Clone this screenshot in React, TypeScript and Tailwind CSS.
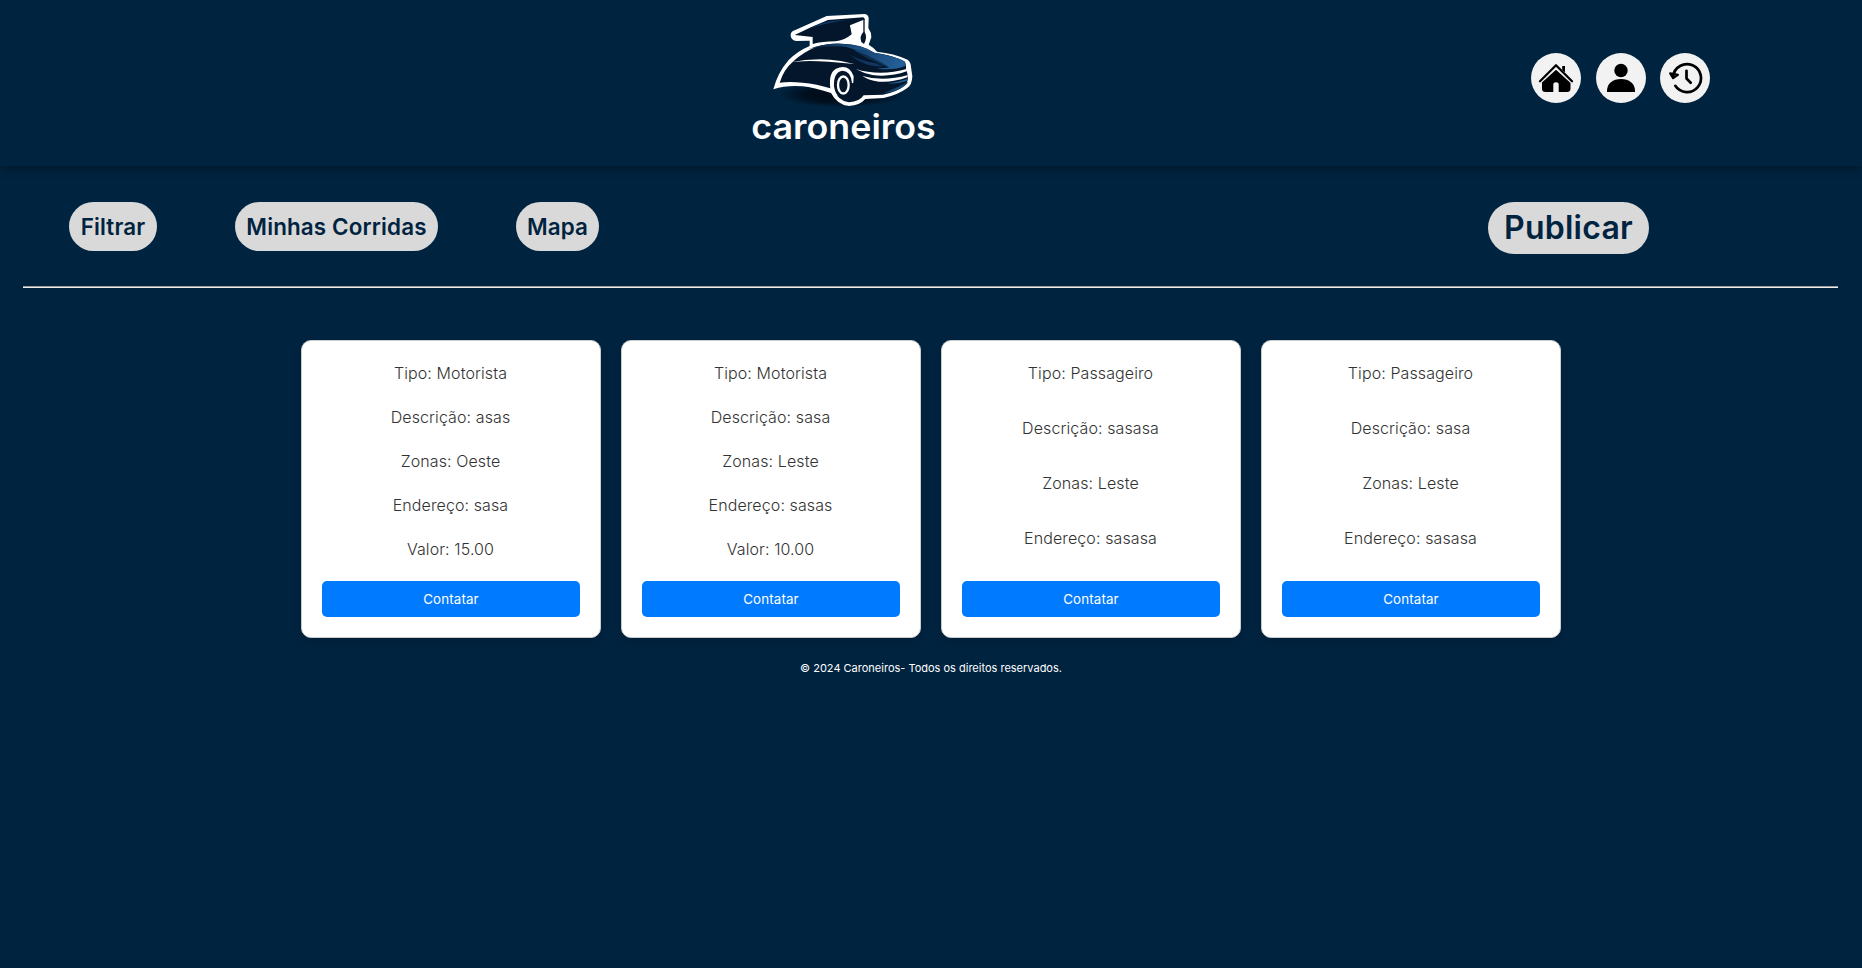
import React from "react";

type Ride = {
  tipo: string;
  descricao: string;
  zonas: string;
  endereco: string;
  valor?: string;
};

const rides: Ride[] = [
  { tipo: "Motorista", descricao: "asas", zonas: "Oeste", endereco: "sasa", valor: "15.00" },
  { tipo: "Motorista", descricao: "sasa", zonas: "Leste", endereco: "sasas", valor: "10.00" },
  { tipo: "Passageiro", descricao: "sasasa", zonas: "Leste", endereco: "sasasa" },
  { tipo: "Passageiro", descricao: "sasa", zonas: "Leste", endereco: "sasasa" },
];

function Logo() {
  return (
    <svg viewBox="0 0 690 480" className="h-[160px] w-[230px]" role="img" aria-label="caroneiros">
      <defs>
        <linearGradient id="roof" x1="0" y1="0" x2="1" y2="0.3">
          <stop offset="0" stopColor="#03162b" />
          <stop offset="0.4" stopColor="#123c66" />
          <stop offset="1" stopColor="#1f5a92" />
        </linearGradient>
        <linearGradient id="hood" x1="0" y1="0" x2="1" y2="0.3">
          <stop offset="0" stopColor="#143f6c" />
          <stop offset="1" stopColor="#235f96" />
        </linearGradient>
        <radialGradient id="ground">
          <stop offset="0" stopColor="#000914" />
          <stop offset="0.6" stopColor="#000914" stopOpacity="0.75" />
          <stop offset="1" stopColor="#000914" stopOpacity="0" />
        </radialGradient>
      </defs>
      <ellipse cx="335" cy="284" rx="190" ry="38" fill="url(#ground)" />
      {/* White outline around car, wheel and cap */}
      <path
        d="M130 268 Q143 218 176 180 Q203 153 239 138 V122 L198 123 Q181 119 182 104 Q183 94 196 90 L290 48 L404 42 Q416 44 416 56 L415 84 Q425 98 424 112 L416 134 Q432 143 441 155 Q491 160 533 179 Q543 187 543 201 L547 229 Q546 255 532 264 Q501 286 461 294 L406 297 Q390 316 357 318 Q322 315 303 279 Q251 262 217 259 Q170 255 130 268Z"
        fill="#fff"
      />
      {/* Body */}
      <path
        d="M149 248 Q161 209 190 184 Q218 158 256 142 Q292 129 336 131 Q397 133 433 158 Q492 166 523 184 Q529 190 528 205 L534 229 Q534 248 524 257 Q501 275 459 284 L401 286 Q389 305 357 307 Q326 304 309 267 Q257 251 218 248 Q177 244 149 248Z"
        fill="#03162b"
      />
      {/* Roof and hood highlights */}
      <path d="M235 148 Q283 128 342 132 Q398 136 433 158 Q402 152 375 149 Q345 137 310 139 Q268 138 235 148Z" fill="url(#roof)" />
      <path
        d="M372 149 Q402 145 433 158 Q493 167 523 184 L528 197 Q494 212 440 206 Q465 205 478 202 Q456 196 431 182 Q398 170 372 149Z"
        fill="url(#hood)"
      />
      <path d="M378 154 Q412 164 440 180 Q462 190 478 202 Q445 192 424 180 Q398 170 378 154Z" fill="#03162b" opacity="0.55" />
      <path d="M362 166 Q396 184 438 190 Q450 196 458 200 Q438 200 418 196 Q385 186 362 166Z" fill="#113760" />
      <path d="M181 187 Q261 171 332 183 Q352 187 373 192 Q286 183 238 183 Q206 184 181 187Z" fill="#fff" />
      {/* Front grille lines */}
      <path d="M377 207 Q452 230 532 206 L530 214 Q479 232 427 225 Q399 219 377 207Z" fill="#fff" />
      <path d="M397 228 Q459 246 534 225 L532 232 Q489 248 447 245 Q413 240 397 228Z" fill="#fff" />
      <path d="M460 280 Q490 268 534 246 Q532 252 524 257 Q501 275 460 280Z" fill="#174873" />
      <path d="M474 250 Q505 246 534 236 V241 Q511 252 474 250Z" fill="#24639a" />
      {/* Front wheel */}
      <path d="M303 278 Q292 220 318 206 Q357 190 371 229 L370 248 L366 250 Q363 213 338 212 Q310 215 312 259 Q315 279 324 287Z" fill="#fff" />
      <ellipse cx="340" cy="255" rx="20" ry="29" fill="#03162b" />
      <ellipse cx="340" cy="255" rx="16" ry="25.5" fill="#03162b" stroke="#fff" strokeWidth="7" />
      {/* Graduation cap */}
      <path d="M194 105 Q239 82 294 60 L400 52 L405 58 L360 76 L365 103 Q343 122 316 124 Q277 124 248 132 V111 L194 105Z" fill="#03162b" />
      <path d="M240 85 Q268 71 298 64 Q330 60 350 61 Q319 64 287 72 Q262 78 240 85Z" fill="#113760" />
      <path d="M360 78 L391 65 V88 L366 104 L370 92Z" fill="#fff" />
      <path d="M400 57 V96 Q388 108 394 126 L402 132 Q413 112 404 96 V56Z" fill="#03162b" />
      <text
        x="64"
        y="416"
        textLength="553"
        lengthAdjust="spacingAndGlyphs"
        fontSize="101"
        fontWeight="600"
        fontFamily="Inter, sans-serif"
        fill="#fff"
      >
        caroneiros
      </text>
    </svg>
  );
}

function HomeIcon() {
  return (
    <svg viewBox="0 0 50 50" className="size-full">
      <path d="M31.2 13h2.8v11h-2.8z" />
      <path d="M11 30V27L25 15l14.5 12v8.5q0 3.5-3.5 3.5h-8.3v-7.5q0-2.3-2.7-2.3t-2.7 2.3V39H14.5Q11 39 11 35.5Z" />
      <path d="M9 28.5 25 14l16 14.5" fill="none" stroke="#f2f2f2" strokeWidth="4.2" />
      <path d="M9 28.2 25 12.3l16 15.9" fill="none" stroke="#000" strokeWidth="2.3" strokeLinecap="round" strokeLinejoin="round" />
    </svg>
  );
}

function UserIcon() {
  return (
    <svg viewBox="0 0 50 50" className="size-full">
      <circle cx="25" cy="17.5" r="6.7" />
      <path d="M11 39v-1.3C11 30.5 17 26 25 26s14 4.5 14 11.7V39Z" />
    </svg>
  );
}

function HistoryIcon() {
  return (
    <svg viewBox="0 0 50 50" className="size-full" fill="none" stroke="#000" strokeWidth="2.7" strokeLinecap="round" strokeLinejoin="round">
      <path d="M13.1 23.5A14 14 0 1 1 15.3 32.8" />
      <path d="m10.2 20.4 2.9 4.8 4.8-3.4Z" strokeWidth="2.2" />
      <path d="M26.5 17.8v7.7l4.2 4.2" />
    </svg>
  );
}

const circle = "size-[50px] rounded-full bg-[#f2f2f2]";
const pill = "h-[49px] rounded-[25px] bg-[#d9d9d9] text-center text-[22.4px] font-semibold leading-[50px] tracking-[0.15px]";

function RideCard({ ride }: { ride: Ride }) {
  const rows = [
    `Tipo: ${ride.tipo}`,
    `Descrição: ${ride.descricao}`,
    `Zonas: ${ride.zonas}`,
    `Endereço: ${ride.endereco}`,
  ];
  if (ride.valor) rows.push(`Valor: ${ride.valor}`);
  return (
    <article className="flex h-[298px] w-[300px] flex-col rounded-[10px] border border-[#cccccc] bg-white p-5 text-center text-[#333333] shadow-[0_4px_8px_rgba(0,0,0,0.1)]">
      <div className="flex h-[220px] flex-col">
        {rows.map((row) => (
          <p key={row} className="-ml-px flex-1 text-base font-light leading-6 tracking-[0.1px]">
            {row}
          </p>
        ))}
      </div>
      <button className="h-9 w-full rounded-[5px] bg-[#007bff] pt-0.5 text-[13.333px] tracking-[0.01em] text-white">Contatar</button>
    </article>
  );
}

export default function App() {
  return (
    <div className="min-h-screen bg-[#00233f] font-['Inter',sans-serif] text-[#00233f]">
      <header className="flex h-[166px] justify-between pl-[730px] pr-[152px] shadow-[0_4px_8px_rgba(0,0,0,0.25)]">
        <Logo />
        <nav className="flex pt-[53px]">
          <button className={circle} aria-label="Início"><HomeIcon /></button>
          <button className={`${circle} ml-[15px]`} aria-label="Perfil"><UserIcon /></button>
          <button className={`${circle} ml-[14px]`} aria-label="Histórico"><HistoryIcon /></button>
        </nav>
      </header>
      <section className="flex h-[120px] items-start pl-[69px] pr-[213px] pt-9">
        <button className={`${pill} w-[88px]`}>Filtrar</button>
        <button className={`${pill} ml-[78px] w-[203px]`}>Minhas Corridas</button>
        <button className={`${pill} ml-[78px] w-[83px]`}>Mapa</button>
        <button className="ml-auto h-[52px] w-[161px] rounded-[26px] bg-[#d9d9d9] text-center text-[32px] font-semibold leading-[52px] tracking-[0.25px]">
          Publicar
        </button>
      </section>
      <hr className="ml-[23px] mr-6 border-b border-t border-b-[#eeeeee] border-t-[#9a9a9a]" />
      <main className="mt-[52px] flex justify-center gap-5">
        {rides.map((ride, i) => (
          <RideCard key={i} ride={ride} />
        ))}
      </main>
      <footer className="pt-5 text-center text-[11px] leading-[21px] text-white">
        © 2024 Caroneiros- Todos os direitos reservados.
      </footer>
    </div>
  );
}
